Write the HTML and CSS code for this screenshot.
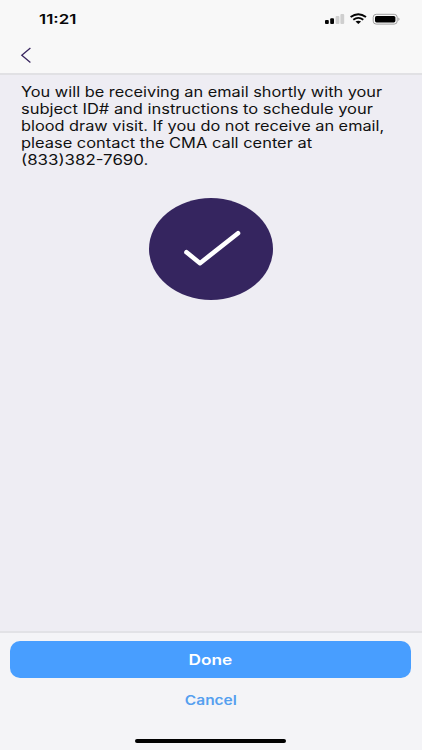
FILE: index.html
```html
<!DOCTYPE html>
<html lang="en">
<head>
<meta charset="utf-8">
<title>Confirmation</title>
<link rel="stylesheet" href="styles.css">
</head>
<body>
<div class="screen">
  <header class="header">
    <div class="status">
      <span class="time">11:21</span>
      <svg class="indicators" width="76" height="14" viewBox="0 0 76 14">
        <g fill="#050505"><rect x="1" y="8" width="3.8" height="4" rx="1"/><rect x="6.2" y="6.3" width="3.8" height="5.7" rx="1"/></g>
        <g fill="#cfcfcf"><rect x="11.6" y="4" width="3.8" height="8" rx="1"/><rect x="16.4" y="2" width="3.8" height="10" rx="1"/></g>
        <g fill="none" stroke="#050505" stroke-width="1.9"><path d="M26.6 5.1Q34.3-.7 42 5.1"/><path d="M29.3 7.7Q34.3 4.1 39.3 7.7"/></g>
        <path d="M31.5 9.6Q34.3 7.9 37.1 9.6L34.3 12Z" fill="#050505"/>
        <rect x="49.2" y="2.3" width="24" height="9.8" rx="3" fill="none" stroke="#a0a0a0"/>
        <rect x="51" y="4" width="20.4" height="6.4" rx="1.6" fill="#000"/>
        <path d="M74.3 5.6Q76.8 7.2 74.3 8.9Z" fill="#a0a0a0"/>
      </svg>
    </div>
    <nav class="nav">
      <svg width="12" height="18" viewBox="0 0 12 18"><path d="M10.4 2L1.8 9.3L10.4 16.5" fill="none" stroke="#39265f" stroke-width="1.3"/></svg>
    </nav>
  </header>
  <main class="content">
    <p class="message">
      <span class="line l1">You will be receiving an email shortly with your</span>
      <span class="line l2">subject ID# and instructions to schedule your</span>
      <span class="line l3">blood draw visit. If you do not receive an email,</span>
      <span class="line l4">please contact the CMA call center at</span>
      <span class="line l5">(833)382-7690.</span>
    </p>
    <svg class="check" width="124" height="102" viewBox="0 0 124 102">
      <ellipse cx="62" cy="51" rx="62" ry="51" fill="#35255f"/>
      <path d="M37.5 54.3L51 65.2L89 35.2" fill="none" stroke="#fff" stroke-width="4.6" stroke-linecap="round" stroke-linejoin="round"/>
    </svg>
  </main>
  <footer class="footer">
    <button class="done"><span class="wide">Done</span></button>
    <button class="cancel"><span class="wide">Cancel</span></button>
    <div class="home"></div>
  </footer>
</div>
</body>
</html>
```
FILE: styles.css
```css
* { box-sizing: border-box; }
body { margin: 0; font-family: Inter, "Liberation Sans", sans-serif; }
button { border: 0; padding: 0; font: inherit; background: none; }
.screen { width: 422px; height: 750px; display: flex; flex-direction: column; background: #eeedf3; overflow: hidden; }
.header { height: 75px; background: #f8f8f8; border-bottom: 2px solid #e1e1e4; }
.status { height: 37px; padding: 12px 22px 0 39px; display: flex; justify-content: space-between; align-items: flex-start; }
.wide { display: inline-block; transform: scaleX(1.19); }
.time { font-size: 13px; line-height: 15px; font-weight: 600; color: #080808; transform-origin: left; transform: scaleX(1.3); }
.nav { height: 36px; padding: 9px 0 0 20px; }
.nav svg { display: block; }
.content { flex: 1; display: flex; flex-direction: column; align-items: center; }
.message { width: 380px; margin: 8px 0 0; font-size: 14px; line-height: 17px; color: #111; }
.line { display: block; width: max-content; white-space: nowrap; transform-origin: left; }
.l1 { transform: scaleX(1.166); }
.l2 { transform: scaleX(1.176); }
.l3 { transform: scaleX(1.165); }
.l4 { transform: scaleX(1.173); }
.l5 { transform: scaleX(1.205); }
.check { display: block; margin-top: 30px; }
.footer { height: 119px; border-top: 2px solid #e2e2e6; background: #f4f4f7; padding: 8px 11px 0 10px; display: flex; flex-direction: column; align-items: center; }
.done { width: 401px; height: 37px; flex: none; border-radius: 10px; background: #489eff; color: #fff; font-size: 14.5px; font-weight: 600; line-height: 37px; }
.cancel { height: 20px; margin-top: 12px; font-size: 13px; line-height: 20px; font-weight: 600; color: #559fef; }
.home { width: 151px; height: 4px; margin-top: 29px; border-radius: 3px; background: #000; }
```
